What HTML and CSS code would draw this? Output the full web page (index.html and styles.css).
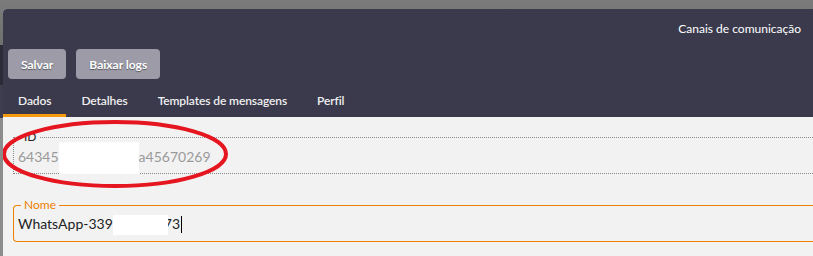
FILE: index.html
```html
<!DOCTYPE html>
<html lang="pt-BR">
<head>
    <meta charset="UTF-8">
    <title>Canais de comunicação</title>
    <link rel="stylesheet" href="styles.css">
</head>
<body>
    <div class="dialog">
        <div class="header">
            <div class="title">Canais de comunicação</div>
            <div class="actions">
                <button class="btn">Salvar</button>
                <button class="btn">Baixar logs</button>
            </div>
            <div class="tabs">
                <div class="tab active">Dados</div>
                <div class="tab">Detalhes</div>
                <div class="tab">Templates de mensagens</div>
                <div class="tab">Perfil</div>
            </div>
        </div>

        <div class="content">
            <fieldset class="field readonly">
                <legend>ID</legend>
                <div class="value">64345<span class="redact redact-id"></span>a45670269</div>
            </fieldset>

            <fieldset class="field focused">
                <legend>Nome</legend>
                <div class="value">WhatsApp-339<span class="redact redact-name"></span>73<span class="caret"></span></div>
            </fieldset>
        </div>

        <svg class="mark" width="230" height="70" viewBox="0 0 230 70">
            <ellipse cx="113" cy="34" rx="111" ry="32" fill="none" stroke="#e5161f" stroke-width="4"/>
        </svg>
    </div>
</body>
</html>
```

FILE: styles.css
```css
/* Fondo de la pagina detras del dialogo */
body {
    margin: 0;
    height: 256px;
    overflow: hidden;
    font-family: Lato, "Open Sans", sans-serif;
    background: linear-gradient(to bottom, #7b7b7b 0, #707070 45px, #2c2c38 45px, #2c2c38 85px, #3d3d4f 85px, #3d3d4f 118px, #8c8c8c 118px);
}

/* Dialogo */
.dialog {
    position: relative;
    margin: 9px 0 0 3px;
    height: 247px;
    background-color: #f2f2f2;
    border-top-left-radius: 4px;
    overflow: hidden;
}

/* Cabecera oscura */
.header {
    background-color: #3a3a4c;
    color: #fff;
}

.title {
    height: 40px;
    line-height: 40px;
    text-align: right;
    padding-right: 12px;
    font-size: 12px;
}

.actions {
    display: flex;
    gap: 10px;
    padding-left: 5px;
}

.btn {
    height: 30px;
    padding: 0 13px;
    border: none;
    border-radius: 4px;
    background-color: #9c9ba7;
    color: #fff;
    font-family: inherit;
    font-size: 12px;
    font-weight: bold;
    text-shadow: 0 1px 1px rgba(0, 0, 0, 0.45);
    cursor: pointer;
}

.tabs {
    display: flex;
    margin-top: 7px;
}

.tab {
    height: 28px;
    line-height: 29px;
    padding: 0 15px;
    font-size: 12px;
    font-weight: 600;
    letter-spacing: -0.1px;
    color: #f0f0f0;
    border-bottom: 3px solid transparent;
    cursor: pointer;
}

.tab.active {
    border-bottom-color: #f59a0c;
}

/* Campos del formulario */
.content {
    padding: 13px 0 0 10px;
}

.field {
    margin: 0 -10px 0 0;
    padding: 2px 5px 5px 4px;
    border: 1px dotted #8a8a8a;
    border-right: none;
}

.field legend {
    margin-left: 3px;
    padding: 0 3px;
    font-size: 12px;
    line-height: 14px;
}

.field .value {
    font-size: 14px;
    line-height: 22px;
    height: 22px;
    white-space: nowrap;
}

.readonly legend {
    color: #222;
}

.readonly .value {
    color: #9a9a9a;
}

.focused {
    margin-top: 24px;
    padding-top: 1px;
    padding-bottom: 6px;
    border: 1px solid #f08000;
    border-right: none;
    border-radius: 4px 0 0 4px;
}

.focused legend {
    color: #f08000;
}

.focused .value {
    color: #222;
}

.caret {
    display: inline-block;
    width: 1px;
    height: 17px;
    margin-left: 1px;
    vertical-align: -4px;
    background-color: #000;
}

/* Partes ocultas del texto */
.redact {
    position: relative;
    z-index: 1;
    display: inline-block;
    background-color: #fff;
    vertical-align: middle;
}

.redact-id {
    width: 80px;
    height: 32px;
    margin: -6px 0;
}

.redact-name {
    width: 55px;
    height: 20px;
    margin-right: -4px;
}

/* Marca roja encima del campo ID */
.mark {
    position: absolute;
    left: -1px;
    top: 111px;
}
```
